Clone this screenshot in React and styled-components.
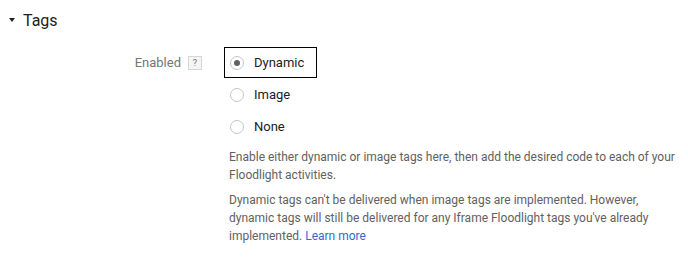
import React, { useState } from 'react';
import styled, { createGlobalStyle } from 'styled-components';

const Global = createGlobalStyle`
  body {
    margin: 0;
    background: #fff;
    font-family: Roboto, 'Liberation Sans', Arial, sans-serif;
  }
`;

const Section = styled.section`
  width: 688px;
  height: 257px;
  background: #fff;
`;

const Header = styled.div`
  display: flex;
  align-items: center;
  gap: 8px;
  height: 20px;
  padding: 10px 0 0 9px;
  color: #212121;
  font-size: 16px;
  cursor: pointer;
`;

const Caret = styled.span`
  width: 0;
  height: 0;
  border-left: 3.5px solid transparent;
  border-right: 3.5px solid transparent;
  border-top: 4px solid #212121;
`;

const Row = styled.div`
  display: flex;
  margin-top: 17px;
`;

const Label = styled.div`
  width: 202px;
  margin-right: 22px;
  display: flex;
  justify-content: flex-end;
  align-items: center;
  gap: 7px;
  height: 31px;
  color: #757575;
  font-size: 13px;
`;

const Help = styled.span`
  width: 12px;
  height: 12px;
  border: 1px solid #d6d6d6;
  background: #f5f5f5;
  color: #757575;
  font-size: 9px;
  line-height: 12px;
  text-align: center;
`;

const Controls = styled.div`
  display: flex;
  flex-direction: column;
`;

const Option = styled.label`
  display: flex;
  align-items: center;
  gap: 10px;
  align-self: flex-start;
  height: 29px;
  padding: 0 12px 0 5px;
  margin-bottom: 1px;
  border: 1px solid ${(p) => (p.$focused ? '#000' : 'transparent')};
  color: #212121;
  font-size: 13px;
  cursor: pointer;
`;

const Circle = styled.span`
  box-sizing: border-box;
  width: 14px;
  height: 14px;
  border-radius: 50%;
  border: 1px solid #c6c6c6;
  display: flex;
  align-items: center;
  justify-content: center;

  &::after {
    content: '';
    width: 6px;
    height: 6px;
    border-radius: 50%;
    background: ${(p) => (p.$checked ? '#616161' : 'transparent')};
  }
`;

const Description = styled.div`
  width: 452px;
  padding-left: 5px;
  margin-top: 5px;
  color: #616161;
  font-size: 12px;
  line-height: 18px;

  p {
    margin: 0 0 7px;
  }
`;

const Link = styled.a`
  color: #3367d6;
  text-decoration: none;
`;

const options = ['Dynamic', 'Image', 'None'];

export default function App() {
  const [value, setValue] = useState('Dynamic');

  return (
    <Section>
      <Global />
      <Header>
        <Caret />
        Tags
      </Header>
      <Row>
        <Label>
          Enabled
          <Help>?</Help>
        </Label>
        <Controls>
          {options.map((o) => (
            <Option key={o} $focused={o === 'Dynamic'} onClick={() => setValue(o)}>
              <Circle $checked={value === o} />
              {o}
            </Option>
          ))}
          <Description>
            <p>
              Enable either dynamic or image tags here, then add the desired code to each of your
              Floodlight activities.
            </p>
            <p>
              Dynamic tags can't be delivered when image tags are implemented. However, dynamic
              tags will still be delivered for any Iframe Floodlight tags you've already
              implemented. <Link href="#">Learn more</Link>
            </p>
          </Description>
        </Controls>
      </Row>
    </Section>
  );
}
